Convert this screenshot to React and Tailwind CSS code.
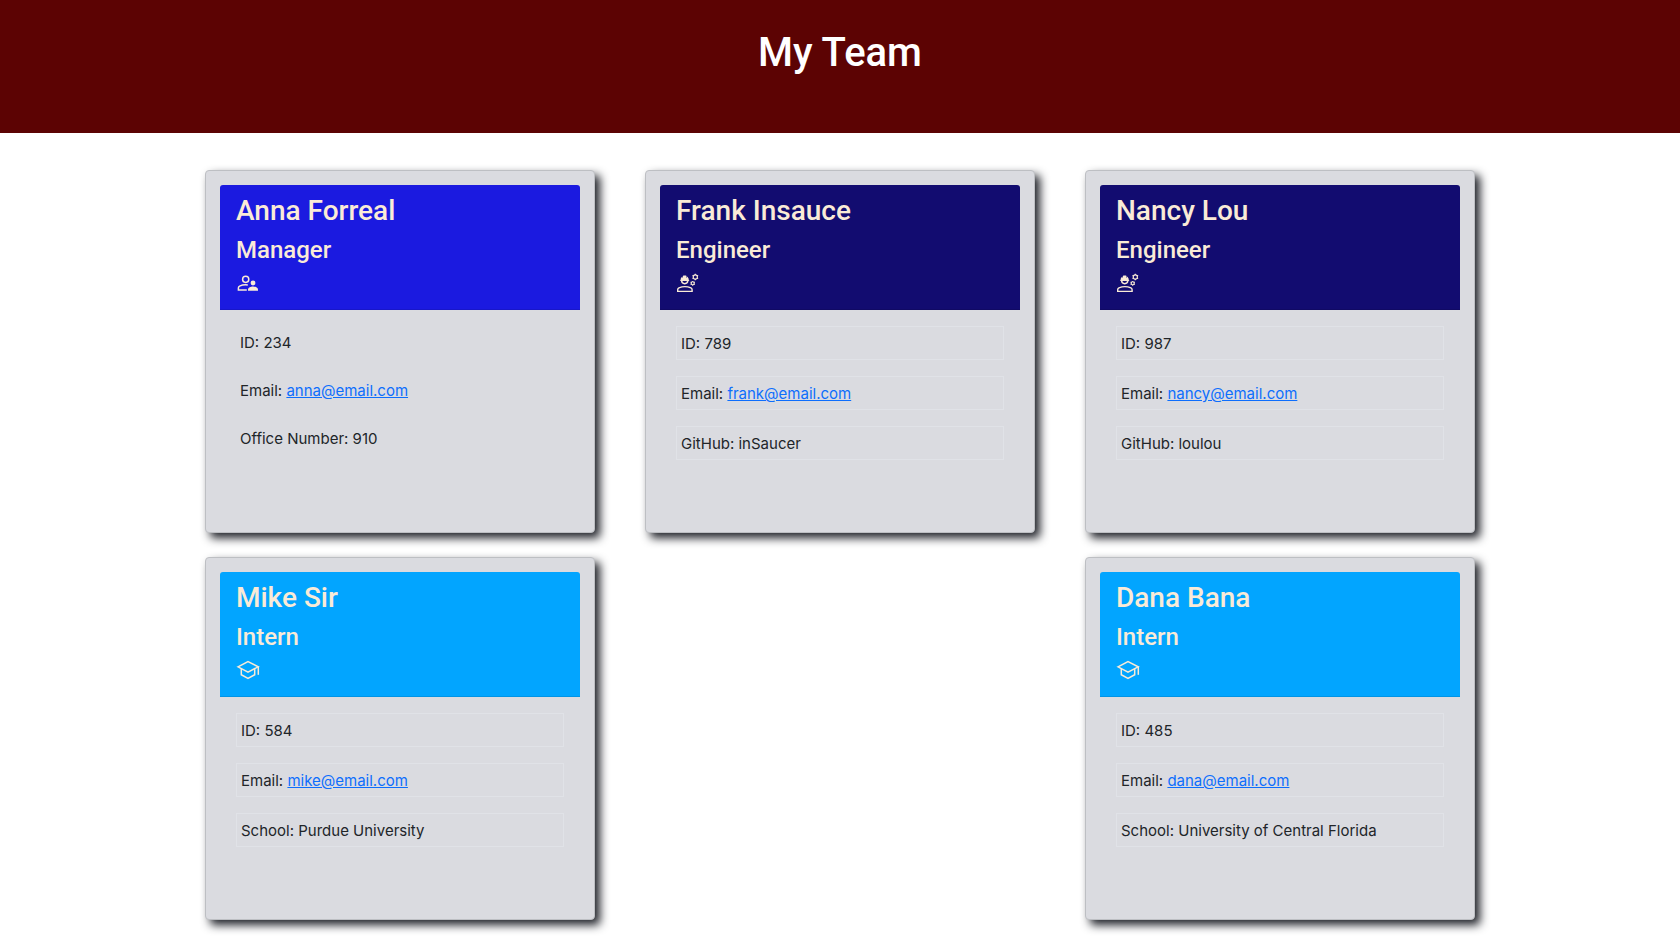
function ManagerIcon(props) {
  return (
    <svg viewBox="0 0 24 24" fill="none" stroke="currentColor" strokeWidth="1.5" {...props}>
      <circle cx="9.7" cy="8.3" r="3.1" />
      <path d="M11.8 14c-3.6-.5-6 .1-8.2 1.1-.8.4-1.2 1-1.2 1.9v2h8.4" />
      <g fill="currentColor" stroke="none">
        <circle cx="17" cy="12" r="2.4" />
        <path d="M12 19.8v-1.3c0-2 2.8-3 5-3s5 1 5 3v1.3z" />
      </g>
    </svg>
  );
}

function EngineerIcon(props) {
  return (
    <svg viewBox="0 0 24 24" fill="none" stroke="currentColor" strokeWidth="1.4" {...props}>
      <path d="M1.7 20.4v-1.6c0-.9.4-1.6 1.2-2 3.7-1.5 8.3-1.5 12 0 .8.4 1.2 1.1 1.2 2v1.6z" />
      <path d="M5.6 9.6c0 1.9 1.4 3.1 3.1 3.1s3.100-1.200 3.100-3.100" />
      <path
        fill="currentColor"
        stroke="none"
        d="M4.600 9.900c-.3 0-.5-.2-.5-.5s.2-.5.5-.5c0-1.400.8-2.600 2-3.300v1.200c0 .3.4.3.4 0V5.100c0-.3.2-.5.5-.5h2.400c.3 0 .5.2.5.500v1.700c0 .3.4.3.4 0V5.600c1.200.7 2 1.900 2 3.300.3 0 .5.2.5.500s-.2.500-.5.500z"
      />
      <g strokeWidth="1.1">
        <circle cx="19.3" cy="6" r="2.1" />
        <circle cx="16.7" cy="12.3" r="1.5" />
        <path d="M19.3 3.900V2.700M19.300 8.100v1.200M21.100 4.950l1-.6M17.500 7.050l-1 .6M21.100 7.050l1 .6M17.500 4.950l-1-.6" />
        <path d="M16.700 10.800v-.9M16.700 13.800v.9M18 11.550l.8-.45M15.400 13.050l-.8.45M18 13.050l.8.45M15.400 11.550l-.8-.45" />
      </g>
    </svg>
  );
}

function InternIcon(props) {
  return (
    <svg viewBox="0 0 24 24" fill="none" stroke="currentColor" strokeWidth="1.5" {...props}>
      <path d="M2 8.800 12 3.500l10.200 5.300L12 14.100z" />
      <path d="M5.300 10.500v6.200l6.700 3.700 6.700-3.700v-6.200" />
      <path d="M22.300 8.600v8.200" />
    </svg>
  );
}

const roles = {
  Manager: { Icon: ManagerIcon, header: "bg-[#1b1ae0]", item: "" },
  Engineer: { Icon: EngineerIcon, header: "bg-[#120c70]", item: "border border-[#e0e2e7]" },
  Intern: { Icon: InternIcon, header: "bg-[#02a5ff]", item: "border border-[#e0e2e7]" },
};

const team = [
  { name: "Anna Forreal", role: "Manager", id: 234, email: "anna@email.com", extra: "Office Number: 910" },
  { name: "Frank Insauce", role: "Engineer", id: 789, email: "frank@email.com", extra: "GitHub: inSaucer" },
  { name: "Nancy Lou", role: "Engineer", id: 987, email: "nancy@email.com", extra: "GitHub: loulou" },
  { name: "Mike Sir", role: "Intern", id: 584, email: "mike@email.com", extra: "School: Purdue University" },
  { name: "Dana Bana", role: "Intern", id: 485, email: "dana@email.com", extra: "School: University of Central Florida", place: "lg:col-start-3" },
];

function MemberCard({ member }) {
  const { Icon, header, item } = roles[member.role];
  return (
    <article
      className={`min-h-[363px] rounded-sm border border-[#bdbfc3] bg-[#dadbe0] p-[14px] shadow-[5px_5px_10px_#1f2128] ${member.place ?? ""}`}
    >
      <header className={`rounded-t-[3px] border-b border-black/10 px-4 pt-[9px] pb-2 text-[#faebd7] ${header}`}>
        <h2 className="mb-2 font-['Roboto',sans-serif] text-[28px] leading-[34px] font-medium">{member.name}</h2>
        <h3 className="mb-[6px] font-['Roboto',sans-serif] text-2xl leading-[29px] font-medium">{member.role}</h3>
        <Icon className="mb-[6px] size-6" aria-hidden="true" />
      </header>
      <ul className="flex flex-col gap-4 p-4">
        <li className={`px-1 pt-[5px] pb-[3px] ${item}`}>ID: {member.id}</li>
        <li className={`px-1 pt-[5px] pb-[3px] ${item}`}>
          Email:{" "}
          <a className="text-[#0d6efd] underline" href={`mailto:${member.email}`}>
            {member.email}
          </a>
        </li>
        <li className={`px-1 pt-[5px] pb-[3px] ${item}`}>{member.extra}</li>
      </ul>
    </article>
  );
}

export default function App() {
  return (
    <div className="bg-white font-['Inter',sans-serif] text-[15px] leading-6 text-[#212529]">
      <header className="bg-[#5c0303] px-4 pt-[29px] pb-14 text-center text-white">
        <h1 className="font-['Roboto',sans-serif] text-[40px] leading-[48px] font-medium">My Team</h1>
      </header>
      <main className="mx-auto grid max-w-[1320px] grid-cols-1 gap-x-[50px] gap-y-6 px-[25px] pt-[37px] pb-[19px] md:grid-cols-2 lg:grid-cols-3">
        {team.map((member) => (
          <MemberCard key={member.name} member={member} />
        ))}
      </main>
    </div>
  );
}
